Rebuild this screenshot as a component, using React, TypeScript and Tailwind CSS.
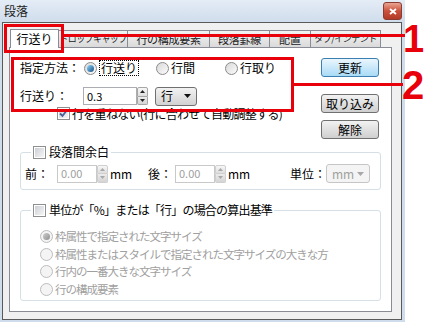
import React from "react";

const font = { fontFamily: '"Noto Sans CJK JP", "Noto Sans", sans-serif' };

function Radio({ checked = false, disabled = false }: { checked?: boolean; disabled?: boolean }) {
  return (
    <span
      className={`w-[13px] h-[13px] rounded-full border flex items-center justify-center shrink-0 ${
        disabled ? "border-[#bcbcbc] bg-[#f4f4f4]" : "border-[#8a8a8a] bg-gradient-to-br from-[#d9d9d9] to-[#fbfbfb]"
      }`}
    >
      {checked && (
        <span
          className={`w-[7px] h-[7px] rounded-full ${
            disabled
              ? "bg-gradient-to-br from-[#cfcfcf] to-[#8e8e8e]"
              : "bg-gradient-to-br from-[#8fd8fb] to-[#164f85]"
          }`}
        />
      )}
    </span>
  );
}

function Check({ checked = false }: { checked?: boolean }) {
  return (
    <span className="w-[13px] h-[13px] border border-[#8e8f8f] bg-white flex items-center justify-center shrink-0">
      <span className="w-[9px] h-[9px] bg-gradient-to-br from-[#cbcfd5] to-[#f6f6f6] flex items-center justify-center">
        {checked && (
          <svg width="9" height="9" viewBox="0 0 9 9">
            <path d="M1 4.5 L3.5 7 L8 1" stroke="#4a5f97" strokeWidth="1.8" fill="none" />
          </svg>
        )}
      </span>
    </span>
  );
}

function Spin({ disabled = false }: { disabled?: boolean }) {
  const c = disabled ? "#a8a8a8" : "#222";
  const b = disabled ? "border-[#cfcfcf]" : "border-[#a6a6a6]";
  return (
    <div className="flex flex-col w-[11px] h-[18px]">
      <div className={`flex-1 border ${b} rounded-t-[2px] bg-gradient-to-b from-[#f7f7f7] to-[#dedede] flex items-center justify-center`}>
        <svg width="5" height="3" viewBox="0 0 5 3">
          <path d="M0 3 L2.5 0 L5 3Z" fill={c} />
        </svg>
      </div>
      <div className={`flex-1 border border-t-0 ${b} rounded-b-[2px] bg-gradient-to-b from-[#ececec] to-[#d4d4d4] flex items-center justify-center`}>
        <svg width="5" height="3" viewBox="0 0 5 3">
          <path d="M0 0 L2.5 3 L5 0Z" fill={c} />
        </svg>
      </div>
    </div>
  );
}

function Btn({ label, primary = false, className = "" }: { label: string; primary?: boolean; className?: string }) {
  return (
    <div
      className={`w-[58px] h-[19px] rounded-[3px] border flex items-center justify-center text-[12px] leading-none ${
        primary
          ? "border-[#3c7fb1] bg-gradient-to-b from-[#eaf6fd] to-[#a9dbf6]"
          : "border-[#707070] bg-gradient-to-b from-[#f2f2f2] to-[#cfcfcf]"
      } ${className}`}
    >
      {label}
    </div>
  );
}

const tabs = [
  { label: "ドロップキャップ", w: "w-[69px]", t: "text-[9px] tracking-[-0.6px]" },
  { label: "行の構成要素", w: "w-[82px]", t: "text-[11px] tracking-[-0.3px]" },
  { label: "段落罫線", w: "w-[60px]", t: "text-[11px] tracking-[-0.3px]" },
  { label: "配置", w: "w-[41px]", t: "text-[11px]" },
  { label: "タブ/インデント", w: "w-[70px]", t: "text-[9px] tracking-[-0.5px]" },
];

export default function App() {
  return (
    <div className="relative w-[425px] h-[322px] bg-white overflow-hidden text-black" style={font}>
      {/* window frame */}
      <div className="w-[405px] h-[322px] flex flex-col bg-[#cfdcec]">
        <div className="h-[22px] flex items-center pl-[4px] pr-[3px] bg-gradient-to-b from-[#e4ecf6] to-[#d0ddec]">
          <span className="text-[12px] text-[#222]">段落</span>
          <div className="ml-auto w-[19px] h-[18px] rounded-[3px] border border-[#8c3b30] bg-gradient-to-b from-[#e9a493] via-[#c9503c] to-[#b33a26] flex items-center justify-center">
            <svg width="8" height="7" viewBox="0 0 8 7">
              <path d="M1 1 L7 6 M7 1 L1 6" stroke="#fff" strokeWidth="1.8" />
            </svg>
          </div>
        </div>

        <div className="ml-[2px] w-[400px] h-[298px] border border-[#5a5a5a] bg-[#f0f0f0] pl-[6px] pt-[5px] flex flex-col">
          {/* tab strip */}
          <div className="flex items-end h-[19px] w-[383px] pl-[1px]">
            <div className="w-[49px] h-[19px] border border-b-0 border-[#898c95] bg-white flex items-center justify-center text-[12px] relative z-10 mb-[-1px] pb-[1px]">
              行送り
            </div>
            {tabs.map((t) => (
              <div
                key={t.label}
                className={`${t.w} ${t.t} h-[17px] overflow-hidden border border-l-0 border-b-0 border-[#898c95] bg-gradient-to-b from-[#f3f3f3] to-[#dadada] flex items-center justify-center text-[#222] whitespace-nowrap`}
              >
                {t.label}
              </div>
            ))}
          </div>

          {/* tab panel */}
          <div className="w-[383px] h-[265px] border border-[#898c95] bg-white px-[10px] pt-[10px] text-[12px] flex flex-col">
            <div className="flex">
              <div className="flex-1 flex flex-col">
                <div className="h-[20px] flex items-center">
                  <span className="w-[64px]">指定方法：</span>
                  <Radio checked />
                  <span className="ml-[2px] border border-dotted border-black px-[1px] leading-[14px]">行送り</span>
                  <span className="ml-[17px]"><Radio /></span>
                  <span className="ml-[2px]">行間</span>
                  <span className="ml-[30px]"><Radio /></span>
                  <span className="ml-[2px]">行取り</span>
                </div>
                <div className="h-[18px] mt-[9px] flex items-center">
                  <span className="w-[63px]">行送り：</span>
                  <div className="w-[54px] h-[18px] border border-[#abadb3] bg-white flex items-center pl-[3px] text-[11px]">0.3</div>
                  <Spin />
                  <div className="ml-[7px] w-[42px] h-[19px] rounded-[3px] border border-[#707070] bg-gradient-to-b from-[#f2f2f2] to-[#d2d2d2] flex items-center pl-[5px]">
                    <span>行</span>
                    <svg className="ml-auto mr-[5px]" width="7" height="4" viewBox="0 0 7 4">
                      <path d="M0 0 L3.5 4 L7 0Z" fill="#111" />
                    </svg>
                  </div>
                </div>
                <div className="h-[15px] mt-[1px] pl-[37px] flex items-center">
                  <Check checked />
                  <span className="ml-[2px] whitespace-nowrap tracking-[-0.7px]">行を重ねない(行に合わせて自動調整する)</span>
                </div>
              </div>
              <div className="w-[58px] mr-[2px] flex flex-col">
                <Btn label="更新" primary />
                <Btn label="取り込み" className="mt-[17px]" />
                <Btn label="解除" className="mt-[7px]" />
              </div>
            </div>

            {/* 段落間余白 */}
            <fieldset className="mt-[5px] w-[361px] border border-[#d5dfe5] rounded-[3px] pb-[6px]">
              <legend className="ml-[10px] px-[2px] h-[16px] flex items-center">
                <Check />
                <span className="ml-[3px]">段落間余白</span>
              </legend>
              <div className="mt-[4px] h-[19px] flex items-center pl-[4px] pr-[10px]">
                <span className="w-[32px]">前：</span>
                <div className="w-[40px] h-[18px] border border-[#c9c9c9] bg-white flex items-center pl-[3px] text-[11px] text-[#a0a0a0]">0.00</div>
                <Spin disabled />
                <span className="ml-[2px] w-[18px]">mm</span>
                <span className="ml-[20px] w-[27px]">後：</span>
                <div className="w-[40px] h-[18px] border border-[#c9c9c9] bg-white flex items-center pl-[3px] text-[11px] text-[#a0a0a0]">0.00</div>
                <Spin disabled />
                <span className="ml-[2px]">mm</span>
                <span className="ml-auto w-[36px]">単位：</span>
                <div className="w-[44px] h-[19px] rounded-[3px] border border-[#c6c6c6] bg-[#f4f4f4] flex items-center pl-[5px] text-[#a0a0a0]">
                  <span>mm</span>
                  <svg className="ml-auto mr-[5px]" width="7" height="4" viewBox="0 0 7 4">
                    <path d="M0 0 L3.5 4 L7 0Z" fill="#a8a8a8" />
                  </svg>
                </div>
              </div>
            </fieldset>

            {/* 算出基準 */}
            <fieldset className="mt-[12px] w-[361px] border border-[#d5dfe5] rounded-[3px] pb-[2px]">
              <legend className="ml-[10px] px-[2px] h-[16px] flex items-center">
                <Check />
                <span className="ml-[3px] whitespace-nowrap tracking-[-0.8px]">単位が「%」または「行」の場合の算出基準</span>
              </legend>
              <div className="mt-[10px] pl-[19px] flex flex-col text-[#a0a0a0] text-[11.5px] tracking-[-1px]">
                {[
                  "枠属性で指定された文字サイズ",
                  "枠属性またはスタイルで指定された文字サイズの大きな方",
                  "行内の一番大きな文字サイズ",
                  "行の構成要素",
                ].map((t, i) => (
                  <div key={t} className="h-[17.5px] flex items-center whitespace-nowrap">
                    <Radio checked={i === 0} disabled />
                    <span className="ml-[2px]">{t}</span>
                  </div>
                ))}
              </div>
            </fieldset>
          </div>
        </div>
      </div>

      {/* annotations */}
      <div className="absolute left-[4px] top-[24px] w-[60px] h-[29px] border-[3px] border-[#e8000b]" />
      <div className="absolute left-[63px] top-[34px] w-[342px] h-[3px] bg-[#e8000b]" />
      <div className="absolute left-[403px] top-[20px] text-[38px] leading-[38px] font-bold text-[#e8000b]" style={{ fontFamily: '"Liberation Sans", Arial, sans-serif' }}>
        1
      </div>
      <div className="absolute left-[11px] top-[57px] w-[283px] h-[55px] border-[3px] border-[#e8000b]" />
      <div className="absolute left-[293px] top-[83px] w-[110px] h-[3px] bg-[#e8000b]" />
      <div className="absolute left-[402px] top-[65px] text-[40px] leading-[40px] font-bold text-[#e8000b]" style={{ fontFamily: '"Liberation Sans", Arial, sans-serif' }}>
        2
      </div>
    </div>
  );
}
